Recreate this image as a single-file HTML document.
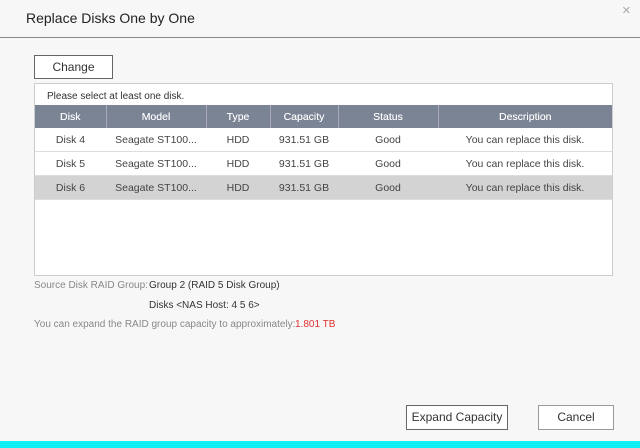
<!DOCTYPE html>
<html><head><style>
body{margin:0;width:640px;height:448px;background:#f7f7f7;font-family:"Liberation Sans",sans-serif;position:relative;overflow:hidden;color:#333}
.a{position:absolute;white-space:nowrap}
.t{font-size:14px;left:26px;top:10px;color:#222}
.hl{left:0;top:37px;width:640px;height:1px;background:#888}
.btn{border:1px solid #666;background:#fff;font-size:12px;text-align:center;box-sizing:border-box;color:#333}
.box{left:34px;top:83px;width:579px;height:193px;border:1px solid #ccc;background:#fff;box-sizing:border-box}
table{border-collapse:collapse;position:absolute;left:0;top:21px;width:577px;font-size:10.5px;table-layout:fixed}
th{background:#7b8494;color:#fff;font-weight:normal;height:23px;border-left:1px solid #aab;padding:0;text-shadow:0 0 0.3px #fff}
th:first-child{border-left:none}
td{text-align:center;height:23px;border-bottom:1px solid #ddd;color:#444;padding:0;white-space:nowrap;overflow:hidden}
tr.s td{background:#d3d3d3}
.sm{font-size:10px}
</style></head><body>
<div class="a t">Replace Disks One by One</div>
<div class="a" style="left:622px;top:2px;color:#aaa;font-size:15px">×</div>
<div class="a hl"></div>
<div class="a btn" style="left:34px;top:55px;width:79px;height:24px;line-height:22px">Change</div>
<div class="a box">
<div class="a sm" style="left:12px;top:7px;color:#333">Please select at least one disk.</div>
<table>
<colgroup><col style="width:71px"><col style="width:100px"><col style="width:64px"><col style="width:68px"><col style="width:100px"><col></colgroup>
<tr><th>Disk</th><th>Model</th><th>Type</th><th>Capacity</th><th>Status</th><th>Description</th></tr>
<tr><td>Disk 4</td><td>Seagate ST100...</td><td>HDD</td><td>931.51 GB</td><td>Good</td><td>You can replace this disk.</td></tr>
<tr><td>Disk 5</td><td>Seagate ST100...</td><td>HDD</td><td>931.51 GB</td><td>Good</td><td>You can replace this disk.</td></tr>
<tr class="s"><td>Disk 6</td><td>Seagate ST100...</td><td>HDD</td><td>931.51 GB</td><td>Good</td><td>You can replace this disk.</td></tr>
</table>
</div>
<div class="a sm" style="left:34px;top:280px;color:#888">Source Disk RAID Group:</div>
<div class="a sm" style="left:149px;top:280px;color:#333">Group 2 (RAID 5 Disk Group)</div>
<div class="a sm" style="left:149px;top:300px;color:#333">Disks &lt;NAS Host: 4 5 6&gt;</div>
<div class="a sm" style="left:34px;top:319px;color:#888">You can expand the RAID group capacity to approximately:</div>
<div class="a sm" style="left:295px;top:319px;color:#e03030">1.801 TB</div>
<div class="a btn" style="left:406px;top:405px;width:102px;height:25px;line-height:23px">Expand Capacity</div>
<div class="a btn" style="left:538px;top:405px;width:76px;height:25px;line-height:23px;border-color:#999">Cancel</div>
<div class="a" style="left:0;top:441px;width:640px;height:7px;background:#0ff0f5"></div>
</body></html>
